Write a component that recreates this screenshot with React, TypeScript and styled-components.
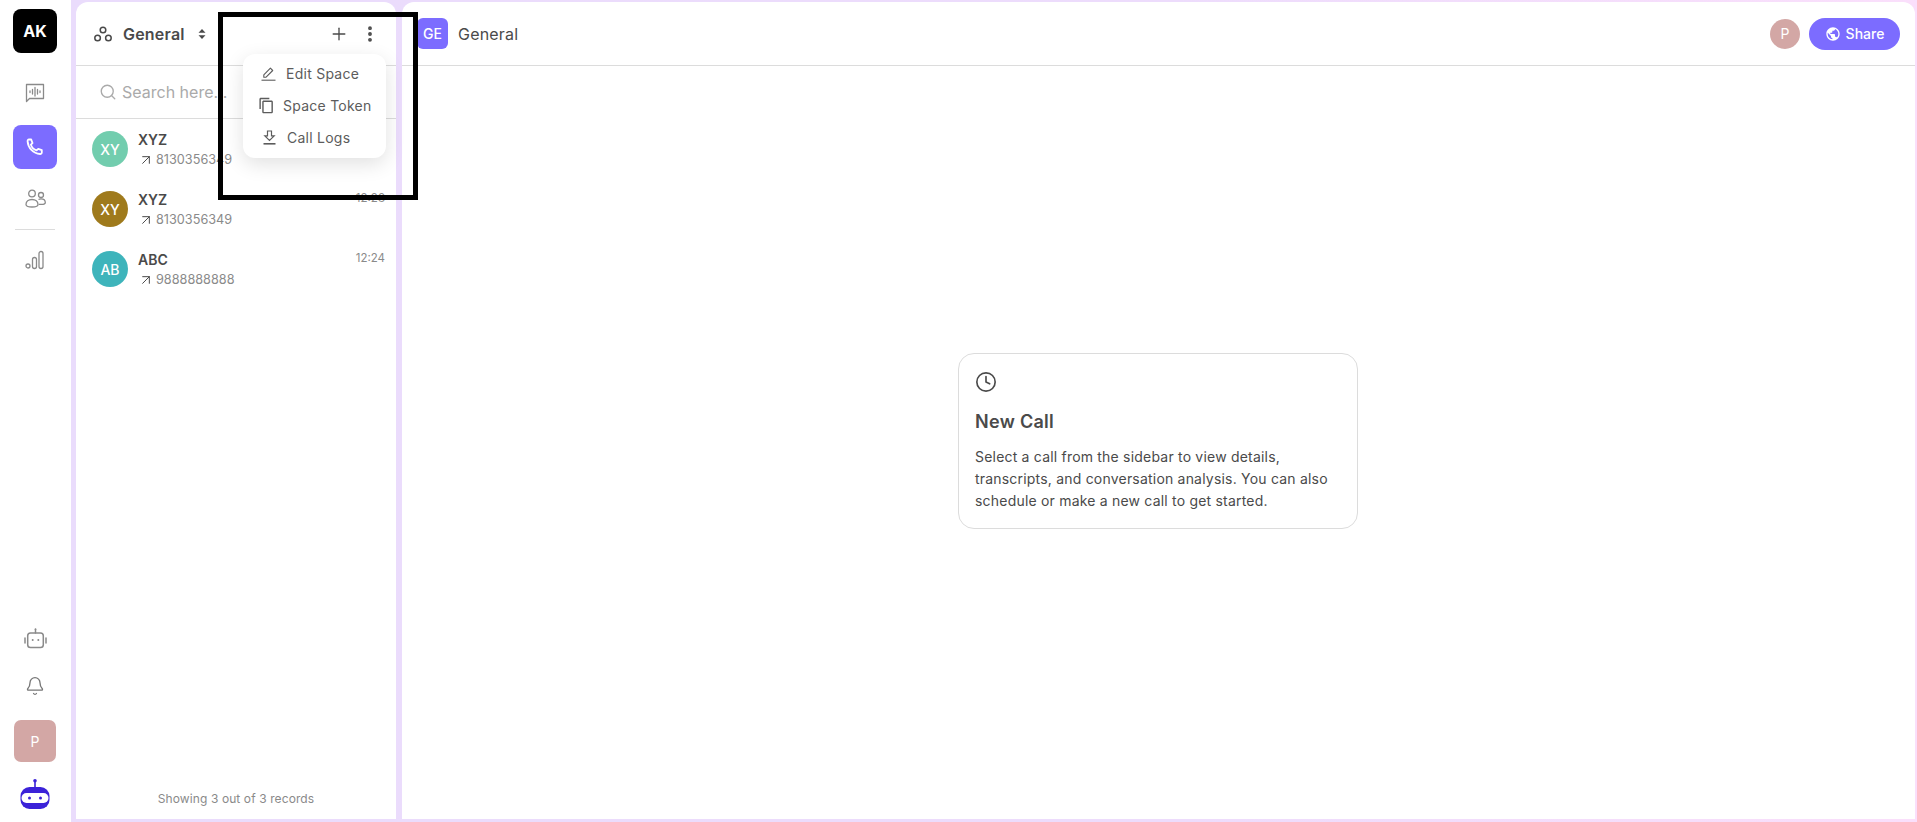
import React, { FC } from 'react'
import styled, { createGlobalStyle } from 'styled-components'
import { ArrowUpRight, Bell, Clock, EllipsisVertical, Plus, Search } from 'lucide-react'
import { MdOutlineContentCopy, MdPublic } from 'react-icons/md'

const GlobalStyle = createGlobalStyle`
    html, body {
        margin: 0;
        padding: 0;
        height: 100%;
        overflow: hidden;
        background: #fff;
        font-family: "Inter", "Liberation Sans", sans-serif;
        color: #4a4a4a;
    }
    * {
        box-sizing: border-box;
    }
`

const Page = styled.div`
    position: relative;
    display: flex;
    width: 1917px;
    height: 822px;
`

const Rail = styled.nav`
    width: 71px;
    flex: none;
    display: flex;
    flex-direction: column;
    justify-content: space-between;
    align-items: center;
    padding: 9px 1px 13px 0;
    background: #fff;
`

const RailGroup = styled.div<{ $gap: number }>`
    display: flex;
    flex-direction: column;
    align-items: center;
    gap: ${p => p.$gap}px;
`

const Logo = styled.div`
    width: 44px;
    height: 44px;
    margin-bottom: 10px;
    border-radius: 8px;
    background: #000;
    color: #fff;
    display: flex;
    align-items: center;
    justify-content: center;
    font-size: 16px;
    font-weight: 700;
`

const NavIcon = styled.div<{ $active?: boolean }>`
    width: 44px;
    height: ${p => (p.$active ? 44 : 28)}px;
    margin-top: ${p => (p.$active ? 2 : 0)}px;
    border-radius: 8px;
    display: flex;
    align-items: center;
    justify-content: center;
    color: ${p => (p.$active ? '#fff' : '#8a8a8a')};
    background: ${p => (p.$active ? '#7c6cff' : 'transparent')};
`

const RailDivider = styled.div`
    width: 40px;
    height: 1px;
    background: #dcdcdc;
`

const UserTile = styled.div`
    width: 42px;
    height: 42px;
    border-radius: 7px;
    background: #d3a7a5;
    color: #fff;
    display: flex;
    align-items: center;
    justify-content: center;
    font-size: 14px;
`

const Workspace = styled.div`
    flex: 1;
    display: flex;
    gap: 6px;
    padding: 2px 2px 3px 5px;
    background: linear-gradient(90deg, #eadcfc 0%, #eddcfc 60%, #fadffb 100%);
`

const ListPanel = styled.section`
    width: 320px;
    flex: none;
    display: flex;
    flex-direction: column;
    background: #fff;
    border-radius: 12px 12px 0 0;
`

const ListHeader = styled.header`
    height: 64px;
    flex: none;
    display: flex;
    align-items: center;
    padding: 0 16px 0 18px;
    border-bottom: 1px solid #dcdcdc;
`

const SpaceName = styled.span`
    margin-left: 11px;
    font-size: 16px;
    font-weight: 600;
    letter-spacing: 0.2px;
`

const Sorter = styled.svg`
    margin-left: 13px;
`

const HeaderActions = styled.div`
    margin-left: auto;
    display: flex;
    align-items: center;
    gap: 11px;
    color: #4a4a4a;
`

const SearchRow = styled.div`
    height: 53px;
    flex: none;
    display: flex;
    align-items: center;
    gap: 5px;
    padding: 0 23px;
    border-bottom: 1px solid #dcdcdc;
    color: #aaa;
`

const SearchInput = styled.input`
    flex: 1;
    min-width: 0;
    border: none;
    outline: none;
    padding: 0;
    font: inherit;
    font-size: 16px;
    &::placeholder {
        color: #aaa;
        opacity: 1;
    }
`

const CallList = styled.div`
    flex: 1;
    display: flex;
    flex-direction: column;
`

const CallRow = styled.div`
    height: 60px;
    display: flex;
    padding: 12px 11px 0 16px;
`

const Avatar = styled.div<{ $color: string }>`
    width: 36px;
    height: 36px;
    flex: none;
    border-radius: 50%;
    background: ${p => p.$color};
    color: #fff;
    display: flex;
    align-items: center;
    justify-content: center;
    font-size: 14px;
    font-weight: 500;
`

const CallText = styled.div`
    margin-left: 10px;
    flex: 1;
`

const CallName = styled.div`
    font-size: 14px;
    font-weight: 600;
    line-height: 17px;
`

const CallNumber = styled.div`
    margin-top: 3px;
    display: flex;
    align-items: center;
    gap: 2px;
    font-size: 12.7px;
    line-height: 18px;
    color: #8a8a8a;
    svg {
        color: #4a4a4a;
    }
`

const CallTime = styled.div`
    font-size: 11.5px;
    line-height: 14px;
    color: #8a8a8a;
`

const ListFooter = styled.footer`
    height: 40px;
    flex: none;
    text-align: center;
    font-size: 12px;
    letter-spacing: 0.1px;
    line-height: 40px;
    color: #8a8a8a;
`

const MainPanel = styled.main`
    flex: 1;
    display: flex;
    flex-direction: column;
    background: #fff;
    border-radius: 12px 12px 0 0;
`

const MainHeader = styled.header`
    height: 64px;
    flex: none;
    display: flex;
    align-items: center;
    padding: 0 15px;
    border-bottom: 1px solid #dcdcdc;
`

const SpaceBadge = styled.div`
    width: 31px;
    height: 31px;
    border-radius: 6px;
    background: #7c6cff;
    color: #fff;
    display: flex;
    align-items: center;
    justify-content: center;
    font-size: 14px;
    font-weight: 500;
`

const MainTitle = styled.span`
    margin-left: 10px;
    font-size: 16px;
    letter-spacing: 0.2px;
`

const MemberDot = styled.div`
    margin-left: auto;
    width: 30px;
    height: 30px;
    border-radius: 50%;
    background: #d3a7a5;
    color: #fff;
    display: flex;
    align-items: center;
    justify-content: center;
    font-size: 14px;
`

const ShareButton = styled.button`
    margin-left: 9px;
    width: 91px;
    height: 32px;
    border: none;
    border-radius: 16px;
    background: #7c6cff;
    color: #fff;
    display: flex;
    align-items: center;
    justify-content: center;
    gap: 5px;
    font: inherit;
    font-size: 14px;
    font-weight: 500;
`

const MainBody = styled.div`
    flex: 1;
    display: flex;
    align-items: center;
    justify-content: center;
    padding: 0 1px 3px 0;
`

const InfoCard = styled.div`
    width: 400px;
    height: 176px;
    padding: 17px 16px;
    border: 1px solid #dcdcdc;
    border-radius: 16px;
    color: #4a4a4a;
    svg {
        display: block;
    }
`

const InfoTitle = styled.h2`
    margin: 17px 0 0;
    font-size: 18px;
    font-weight: 600;
    letter-spacing: 0.3px;
    line-height: 24px;
`

const InfoText = styled.p`
    margin: 12px 0 0;
    font-size: 14px;
    letter-spacing: 0.2px;
    line-height: 22px;
`

const Menu = styled.div`
    position: absolute;
    left: 243px;
    top: 54px;
    width: 143px;
    height: 104px;
    padding: 3px 0;
    border-radius: 12px;
    background: #fff;
    box-shadow: 0 6px 20px rgba(0, 0, 0, 0.12);
    z-index: 2;
`

const MenuItem = styled.div<{ $indent: number; $gap: number }>`
    height: 32px;
    display: flex;
    align-items: center;
    gap: ${p => p.$gap}px;
    padding-left: ${p => p.$indent}px;
    font-size: 14px;
    letter-spacing: 0.25px;
    color: #5c5c5c;
`

const AnnotationFrame = styled.div`
    position: absolute;
    left: 218px;
    top: 12px;
    width: 200px;
    height: 188px;
    border: 5px solid #000;
    pointer-events: none;
    z-index: 3;
`

const SpacesIcon = () => (
    <svg width="18" height="16" viewBox="0 0 18 16" fill="none" stroke="#4a4a4a" strokeWidth="1.5">
        <circle cx="9" cy="4" r="2.8" />
        <circle cx="3.6" cy="12" r="2.8" />
        <circle cx="14.4" cy="12" r="2.8" />
    </svg>
)

const VoiceChatIcon = () => (
    <svg width="20" height="20" viewBox="0 0 20 20" fill="none" stroke="currentColor" strokeWidth="1.3" strokeLinecap="round">
        <path d="M1.5 1.5h17v14H4.5l-3 3z" strokeLinejoin="round" />
        <path d="M5 8v1.5M7.5 6.5v4.5M10 4.5v8.5M12.5 6.5v4.5M15 8v1.5" />
    </svg>
)

const HandsetIcon = () => (
    <svg width="18" height="18" viewBox="0 0 18 18" fill="none" stroke="currentColor" strokeWidth="1.8" strokeLinecap="round" strokeLinejoin="round">
        <path d="M3 1.5h2.2l1.3 3.6-1.6 1.6c.9 2.7 3 4.8 5.7 5.7l1.6-1.5 3.6 1.2v2.4c0 1-.8 1.6-1.7 1.5C7.2 15.500 2 9.800 1.600 3.400 1.500 2.300 2 1.500 3 1.500z" />
    </svg>
)

const TeamIcon = () => (
    <svg width="21" height="20" viewBox="0 0 21 20" fill="none" stroke="currentColor" strokeWidth="1.3">
        <circle cx="7" cy="4.5" r="3.3" />
        <circle cx="16" cy="6" r="2.5" />
        <path d="M1 15.500c0-3 2.500-5 6-5s6 2 6 5c0 1.600-2.600 2.500-6 2.500s-6-.9-6-2.500z" />
        <path d="M13.500 10.500c.8-.5 1.600-.7 2.500-.7 2.500 0 4.300 1.500 4.300 3.600 0 1.200-1.600 2-4 2h-2.500" />
    </svg>
)

const BarsIcon = () => (
    <svg width="20" height="20" viewBox="0 0 20 20" fill="none" stroke="currentColor" strokeWidth="1.3">
        <circle cx="3" cy="16" r="2" />
        <rect x="7.500" y="7.500" width="4" height="11" rx="2" />
        <rect x="14" y="1.500" width="4" height="17" rx="2" />
    </svg>
)

const BotOutline = () => (
    <svg width="23" height="21" viewBox="0 0 23 21" fill="none" stroke="currentColor" strokeWidth="1.5" strokeLinecap="round">
        <circle cx="11.500" cy="1.200" r="0.9" fill="currentColor" stroke="none" />
        <path d="M11.500 1.500v3.500" />
        <rect x="3.700" y="5" width="15.600" height="14.500" rx="2.800" />
        <path d="M1 10v5M22 10v5" />
        <circle cx="8.700" cy="12" r="1" fill="currentColor" stroke="none" />
        <circle cx="14.300" cy="12" r="1" fill="currentColor" stroke="none" />
    </svg>
)

const RobotMark = () => (
    <svg width="30" height="30" viewBox="0 0 30 30">
        <circle cx="15" cy="1.800" r="1.800" fill="#3b22d8" />
        <rect x="14.200" y="2" width="1.600" height="7" fill="#3b22d8" />
        <rect x="0.500" y="8" width="29" height="22" rx="9" fill="#3b22d8" />
        <rect x="1.500" y="14" width="27" height="10" rx="5" fill="#fff" />
        <circle cx="9.500" cy="19" r="1.500" fill="#3b22d8" />
        <circle cx="20.500" cy="19" r="1.500" fill="#3b22d8" />
    </svg>
)

const PenLineIcon = () => (
    <svg width="15" height="15" viewBox="0 0 15 15" fill="none" stroke="currentColor" strokeWidth="1.100" strokeLinejoin="round">
        <path d="M2.800 11.200v-2.300l6.600-6.700 2.300 2.300-6.600 6.700z" />
        <path d="M0.500 14.200h14" />
    </svg>
)

const SaveIcon = () => (
    <svg width="13" height="15" viewBox="0 0 13 15" fill="none" stroke="currentColor" strokeWidth="1.200">
        <path d="M4.500 1h4v4.800h2.700L6.500 10.500 1.800 5.800h2.700z" />
        <path d="M0.500 13.800h12" strokeWidth="1.600" />
    </svg>
)

const calls = [
    { initials: 'XY', color: '#72cdae', name: 'XYZ', number: '8130356349', time: '12:30' },
    { initials: 'XY', color: '#9f7a1c', name: 'XYZ', number: '8130356349', time: '12:28' },
    { initials: 'AB', color: '#3eb4bb', name: 'ABC', number: '9888888888', time: '12:24' },
]

const App: FC = () => {
    return (
        <Page>
            <GlobalStyle />
            <Rail>
                <RailGroup $gap={16}>
                    <Logo>AK</Logo>
                    <NavIcon><VoiceChatIcon /></NavIcon>
                    <NavIcon $active><HandsetIcon /></NavIcon>
                    <NavIcon><TeamIcon /></NavIcon>
                    <RailDivider />
                    <NavIcon><BarsIcon /></NavIcon>
                </RailGroup>
                <RailGroup $gap={17}>
                    <RailGroup $gap={20}>
                        <NavIcon><BotOutline /></NavIcon>
                        <NavIcon><Bell size={20} strokeWidth={1.6} color="#777" /></NavIcon>
                        <UserTile>P</UserTile>
                    </RailGroup>
                    <RobotMark />
                </RailGroup>
            </Rail>
            <Workspace>
                <ListPanel>
                    <ListHeader>
                        <SpacesIcon />
                        <SpaceName>General</SpaceName>
                        <Sorter width="8" height="12" viewBox="0 0 8 12" fill="#4a4a4a">
                            <path d="M4 1l3.500 3.800h-7zM4 11L.5 7.200h7z" />
                        </Sorter>
                        <HeaderActions>
                            <Plus size={20} strokeWidth={1.6} />
                            <EllipsisVertical size={20} strokeWidth={2.6} />
                        </HeaderActions>
                    </ListHeader>
                    <SearchRow>
                        <Search size={18} strokeWidth={1.8} />
                        <SearchInput placeholder="Search here..." />
                    </SearchRow>
                    <CallList>
                        {calls.map((call, i) => (
                            <CallRow key={i}>
                                <Avatar $color={call.color}>{call.initials}</Avatar>
                                <CallText>
                                    <CallName>{call.name}</CallName>
                                    <CallNumber>
                                        <ArrowUpRight size={16} strokeWidth={1.5} />
                                        {call.number}
                                    </CallNumber>
                                </CallText>
                                <CallTime>{call.time}</CallTime>
                            </CallRow>
                        ))}
                    </CallList>
                    <ListFooter>Showing 3 out of 3 records</ListFooter>
                </ListPanel>
                <MainPanel>
                    <MainHeader>
                        <SpaceBadge>GE</SpaceBadge>
                        <MainTitle>General</MainTitle>
                        <MemberDot>P</MemberDot>
                        <ShareButton><MdPublic size={16} />Share</ShareButton>
                    </MainHeader>
                    <MainBody>
                        <InfoCard>
                            <Clock size={22} strokeWidth={1.8} />
                            <InfoTitle>New Call</InfoTitle>
                            <InfoText>
                                Select a call from the sidebar to view details,
                                <br />
                                transcripts, and conversation analysis. You can also
                                <br />
                                schedule or make a new call to get started.
                            </InfoText>
                        </InfoCard>
                    </MainBody>
                </MainPanel>
            </Workspace>
            <Menu>
                <MenuItem $indent={18} $gap={10}><PenLineIcon />Edit Space</MenuItem>
                <MenuItem $indent={15} $gap={8}><MdOutlineContentCopy size={17} />Space Token</MenuItem>
                <MenuItem $indent={20} $gap={11}><SaveIcon />Call Logs</MenuItem>
            </Menu>
            <AnnotationFrame />
        </Page>
    )
}

export default App
